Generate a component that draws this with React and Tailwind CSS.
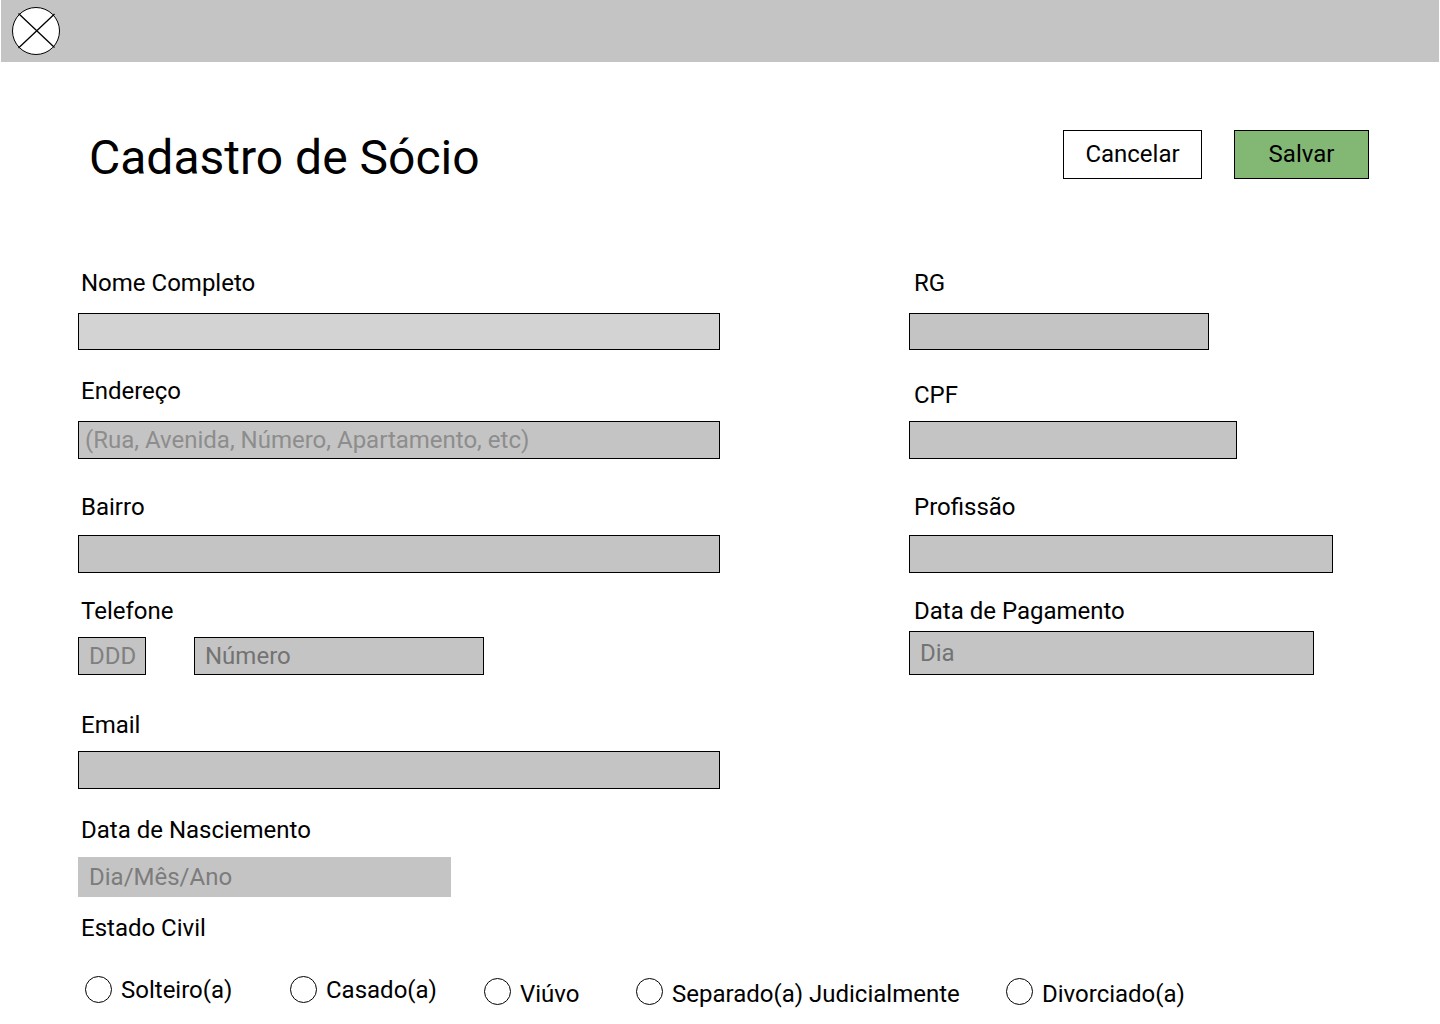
const LEFT_FIELDS = [
  {
    label: "Nome Completo",
    className: "gap-4",
    inputs: [{ id: "nome", className: "h-[37px] w-full border border-black bg-[#d3d3d3] pl-2.5" }],
  },
  {
    label: "Endereço",
    className: "mt-[27px] gap-4",
    inputs: [
      {
        id: "endereco",
        placeholder: "(Rua, Avenida, Número, Apartamento, etc)",
        className: "h-[38px] w-full border border-black bg-[#c4c4c4] pl-1.5 placeholder:text-[#8d8d8d]",
      },
    ],
  },
  {
    label: "Bairro",
    className: "mt-[34px] gap-3.5",
    inputs: [{ id: "bairro", className: "h-[38px] w-full border border-black bg-[#c4c4c4] pl-2.5" }],
  },
  {
    label: "Telefone",
    className: "mt-6 gap-3",
    inputs: [
      {
        id: "ddd",
        placeholder: "DDD",
        className: "h-[38px] w-[68px] border border-black bg-[#c4c4c4] pl-2.5 placeholder:text-[#808080]",
      },
      {
        id: "numero",
        placeholder: "Número",
        className: "h-[38px] w-[290px] border border-black bg-[#c4c4c4] pl-2.5 placeholder:text-[#737373]",
      },
    ],
  },
  {
    label: "Email",
    className: "mt-9 gap-3",
    inputs: [{ id: "email", type: "email", className: "h-[38px] w-full border border-black bg-[#c4c4c4] pl-2.5" }],
  },
  {
    label: "Data de Nasciemento",
    className: "mt-[27px] gap-[13px]",
    inputs: [
      {
        id: "nascimento",
        placeholder: "Dia/Mês/Ano",
        className: "h-10 w-[373px] border border-[#c4c4c4] bg-[#c4c4c4] pl-2.5 placeholder:text-[#7c7c7c]",
      },
    ],
  },
];

const RIGHT_FIELDS = [
  {
    label: "RG",
    className: "gap-4",
    inputs: [{ id: "rg", className: "h-[37px] w-[300px] border border-black bg-[#c4c4c4] pl-2.5" }],
  },
  {
    label: "CPF",
    className: "mt-[31px] gap-3",
    inputs: [{ id: "cpf", className: "h-[38px] w-[328px] border border-black bg-[#c4c4c4] pl-2.5" }],
  },
  {
    label: "Profissão",
    className: "mt-[34px] gap-3.5",
    inputs: [{ id: "profissao", className: "h-[38px] w-[424px] border border-black bg-[#c4c4c4] pl-2.5" }],
  },
  {
    label: "Data de Pagamento",
    className: "mt-6 gap-1.5",
    inputs: [
      {
        id: "pagamento",
        placeholder: "Dia",
        className: "h-11 w-[405px] border border-black bg-[#c4c4c4] pl-2.5 placeholder:text-[#737373]",
      },
    ],
  },
];

const RAISED = { item: "", text: "" };
const LOWERED = { item: "mt-0.5", text: "pt-0.5" };

const CIVIL_STATUS = [
  { label: "Solteiro(a)", value: "solteiro", style: RAISED },
  { label: "Casado(a)", value: "casado", style: RAISED },
  { label: "Viúvo", value: "viuvo", style: LOWERED },
  { label: "Separado(a) Judicialmente", value: "separado", style: LOWERED },
  { label: "Divorciado(a)", value: "divorciado", style: LOWERED },
];

function Field({ label, className, labelClassName, inputs }) {
  return (
    <div className={`flex flex-col ${className}`}>
      <label htmlFor={inputs[0].id} className={labelClassName}>
        {label}
      </label>
      <div className="flex gap-12">
        {inputs.map((input) => (
          <input
            key={input.id}
            id={input.id}
            name={input.id}
            type={input.type || "text"}
            placeholder={input.placeholder}
            aria-label={inputs.length > 1 ? `${label} ${input.placeholder}` : undefined}
            className={`max-w-full min-w-0 rounded-none placeholder:opacity-100 ${input.className}`}
          />
        ))}
      </div>
    </div>
  );
}

function Logo() {
  return (
    <svg viewBox="0 0 48 48" className="size-12" role="img" aria-label="Logo" fill="none" stroke="black">
      <circle cx="24" cy="24" r="23.5" fill="white" />
      <path d="M6.5 6.5L42.5 40.5M42.5 7L6.5 41" strokeWidth="1.3" />
    </svg>
  );
}

export default function App() {
  return (
    <div className="min-h-screen bg-white font-['Roboto',sans-serif] text-2xl leading-7 text-black">
      <header className="mx-px flex bg-[#c4c4c4] px-[11px] py-[7px]">
        <Logo />
      </header>
      <form className="pt-[68px] pr-[71px] pl-[78px]" onSubmit={(e) => e.preventDefault()}>
        <div className="flex items-start justify-between">
          <h1 className="pl-[11px] text-5xl leading-14">Cadastro de Sócio</h1>
          <div className="flex gap-8">
            <button type="button" className="h-[49px] w-[139px] border border-black bg-white pb-0.5">
              Cancelar
            </button>
            <button type="submit" className="h-[49px] w-[135px] border border-black bg-[#82b874] pb-0.5">
              Salvar
            </button>
          </div>
        </div>
        <div className="mt-[83px] grid grid-cols-[642fr_460fr] gap-x-[189px]">
          <div className="flex flex-col">
            {LEFT_FIELDS.map((field) => (
              <Field key={field.label} labelClassName="pl-[3px]" {...field} />
            ))}
          </div>
          <div className="flex flex-col">
            {RIGHT_FIELDS.map((field) => (
              <Field key={field.label} labelClassName="pl-[5px]" {...field} />
            ))}
          </div>
        </div>
        <fieldset className="mt-[17px]">
          <legend className="pl-[3px]">Estado Civil</legend>
          <div className="mt-[34px] grid grid-cols-[205fr_194fr_152fr_370fr_363fr] pl-[7px]">
            {CIVIL_STATUS.map(({ label, value, style }) => (
              <label key={value} className={`flex items-start gap-[9px] whitespace-nowrap ${style.item}`}>
                <input
                  type="radio"
                  name="estado-civil"
                  value={value}
                  className="size-[27px] shrink-0 appearance-none rounded-full border border-black bg-white checked:bg-black"
                />
                <span className={style.text}>{label}</span>
              </label>
            ))}
          </div>
        </fieldset>
      </form>
    </div>
  );
}
